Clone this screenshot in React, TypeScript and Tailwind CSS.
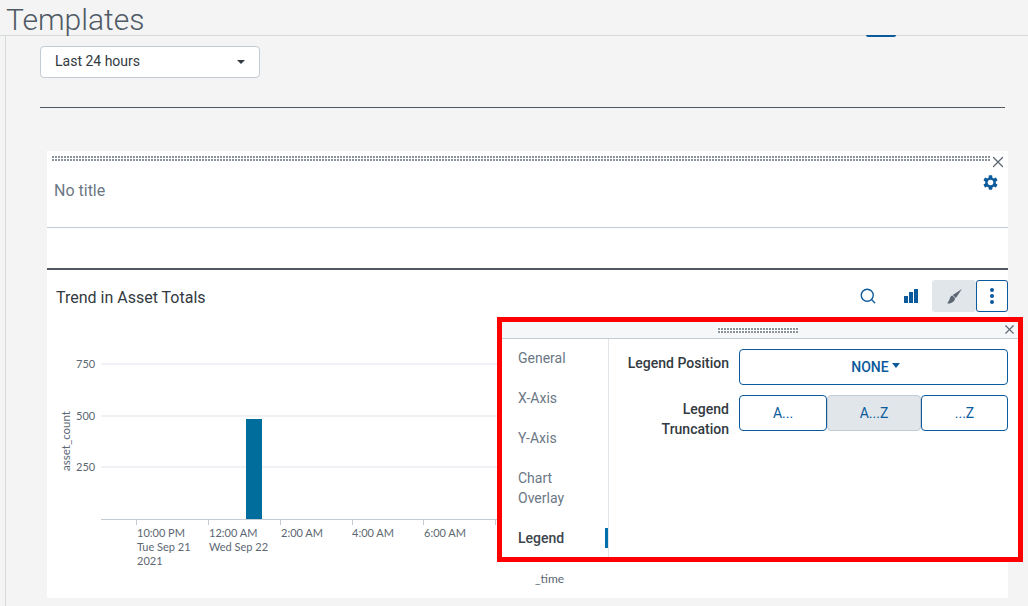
import { Search, X } from "lucide-react"

const ticks = [136, 208, 280, 352, 423, 495]
const gridLines = [364, 416, 467]

function Grip({ className }: { className: string }) {
  return (
    <div
      className={
        "bg-[#8a939c] bg-[linear-gradient(90deg,#ffffff_1px,transparent_1px),linear-gradient(#ffffff_1px,transparent_1px)] bg-[length:3px_3px] " + className
      }
    />
  )
}

function Gear() {
  return (
    <svg width="15" height="15" viewBox="0 0 15 15" fill="#0b5a9c" className="absolute left-[936px] top-[24px]">
      {[0, 60, 120].map((deg) => (
        <rect key={deg} x="5.7" y="0.3" width="3.6" height="14.4" rx="0.6" transform={`rotate(${deg} 7.5 7.5)`} />
      ))}
      <circle cx="7.5" cy="7.5" r="4" fill="none" stroke="#0b5a9c" strokeWidth="2.6" />
      <circle cx="7.5" cy="7.5" r="2.8" fill="#fff" />
    </svg>
  )
}

function Chart() {
  return (
    <svg width="961" height="286" viewBox="47 312 961 286" className="block" style={{ fontFamily: "Lato, sans-serif" }}>
      {gridLines.map((y) => (
        <line key={y} x1="101" x2="1008" y1={y} y2={y} stroke="#e1e6eb" strokeWidth="1" />
      ))}
      <line x1="101" x2="1008" y1="519.5" y2="519.5" stroke="#c3cbd4" strokeWidth="1" />
      {ticks.map((x) => (
        <line key={x} x1={x + 0.5} x2={x + 0.5} y1="519" y2="525" stroke="#c3cbd4" strokeWidth="1" />
      ))}
      <rect x="246" y="419" width="16" height="100" fill="#006d9c" />
      <g fontSize="11" fill="#5c6773">
        <text x="76" y="368">750</text>
        <text x="76" y="420">500</text>
        <text x="76" y="471">250</text>
        <text x="137" y="537">10:00 PM</text>
        <text x="137" y="551">Tue Sep 21</text>
        <text x="137" y="565">2021</text>
        <text x="209" y="537">12:00 AM</text>
        <text x="209" y="551">Wed Sep 22</text>
        <text x="281" y="537">2:00 AM</text>
        <text x="352" y="537">4:00 AM</text>
        <text x="424" y="537">6:00 AM</text>
        <text x="535" y="583" fontSize="12">_time</text>
        <text transform="translate(70 441) rotate(-90)" textAnchor="middle" fontSize="11.5">asset_count</text>
      </g>
    </svg>
  )
}

function LegendPanel() {
  const items = ["General", "X-Axis", "Y-Axis"]
  const segBtn = "flex items-center justify-center h-[36px] border border-[#0b5a9c] rounded-[4px] bg-white text-[#0b5a9c] text-sm"

  return (
    <div className="absolute left-[450px] top-[166px] w-[526px] h-[245px] border-[5px] border-[#ff0000] bg-white flex flex-col">
      <div className="relative h-[17px] shrink-0 bg-[#f5f7f8] border-b border-[#c3cbd4] flex items-center justify-center">
        <Grip className="w-[81px] h-[6px] mr-[6px]" />
        <X size={15} strokeWidth={1.8} className="absolute right-[1px] top-0 text-[#5c6773]" />
      </div>
      <div className="flex flex-1">
        <div className="w-[107px] border-r border-[#e1e6eb] pl-[16px] pt-[9px] text-sm leading-[20px] text-[#6b7785]">
          {items.map((item) => (
            <div key={item} className="mb-[20px]">{item}</div>
          ))}
          <div className="mb-[20px]">Chart<br />Overlay</div>
          <div className="relative text-[#3c444d] font-medium">
            Legend
            <div className="absolute right-0 top-0 w-[3px] h-[20px] bg-[#0070ad]" />
          </div>
        </div>
        <div className="flex-1 px-[10px] pt-[10px]">
          <div className="flex gap-[10px] mb-[10px]">
            <div className="w-[110px] text-right text-sm leading-[20px] font-medium text-[#333a41] pt-[4px]">Legend Position</div>
            <div className="flex-1 flex items-center justify-center gap-[3px] pl-[4px] h-[36px] border border-[#0b5a9c] rounded-[4px] text-[#0b5a9c] text-sm font-medium">
              NONE
              <span className="mb-[3px] border-x-[4px] border-t-[5px] border-x-transparent border-t-[#0b5a9c]" />
            </div>
          </div>
          <div className="flex gap-[10px]">
            <div className="w-[110px] text-right text-sm leading-[20px] font-medium text-[#333a41] pt-[4px]">Legend<br />Truncation</div>
            <div className="flex-1 flex">
              <div className={segBtn + " w-[88px]"}>A...</div>
              <div className="flex items-center justify-center h-[36px] w-[94px] border border-[#c3cbd4] rounded-[4px] bg-[#e1e6eb] text-[#0b5a9c] text-sm">A...Z</div>
              <div className={segBtn + " flex-1"}>...Z</div>
            </div>
          </div>
        </div>
      </div>
    </div>
  )
}

export default function App() {
  return (
    <div className="relative w-[1028px] h-[606px] overflow-hidden bg-[#f4f4f4]" style={{ fontFamily: "Roboto, sans-serif" }}>
      <div className="relative h-[36px] border-b border-[#d5dadc] pl-[6px]">
        <h1 className="text-[30px] leading-[40px] font-light text-[#4f5a65]">Templates</h1>
        <div className="absolute left-[866px] bottom-[-2px] w-[30px] h-[2px] rounded-b-[2px] bg-[#0b5a9c]" />
      </div>
      <div className="ml-[5px] h-[570px] border-l border-[#d5dadc]">
        <div className="pl-[34px] pt-[10px] pr-[23px]">
          <div className="flex items-center justify-between w-[220px] h-[32px] bg-white border border-[#c3cbd4] rounded-[4px] px-[14px] text-sm text-[#333a41]">
            <span className="pb-[2px]">Last 24 hours</span>
            <span className="border-x-[4px] border-t-[4px] border-x-transparent border-t-[#333a41]" />
          </div>
          <div className="mt-[29px] h-px bg-[#51585f]" />
        </div>
        <div className="relative ml-[41px] mt-[43px] w-[961px] h-[447px] bg-white">
          <div className="relative h-[77px] border-b border-[#c3cbd4]">
            <Grip className="absolute left-[4px] top-[4px] w-[939px] h-[6px]" />
            <X size={18} strokeWidth={1.7} className="absolute right-px top-[2px] text-[#5c6773]" />
            <Gear />
            <div className="pl-[7px] pt-[30px] text-base leading-[20px] text-[#6b7785]">No title</div>
          </div>
          <div className="h-[42px] border-b-2 border-[#51585f]" />
          <div className="flex items-center h-[42px] pt-[10px]">
            <div className="pl-[9px] pt-[4px] text-base text-[#333a41]">Trend in Asset Totals</div>
            <div className="ml-auto flex items-center h-[32px]">
              <div className="w-[43px] flex justify-center"><Search size={18} strokeWidth={1.8} className="text-[#0b5a9c]" /></div>
              <div className="w-[43px] flex justify-center">
                <svg width="14" height="14" viewBox="0 0 14 14" fill="#0b5a9c">
                  <rect x="0" y="7" width="4" height="7" />
                  <rect x="5" y="3" width="4" height="11" />
                  <rect x="10" y="0" width="4" height="14" />
                </svg>
              </div>
              <div className="w-[44px] h-[32px] bg-[#e1e6eb] rounded-[3px] flex items-center justify-center">
                <svg width="15" height="15" viewBox="0 0 15 15" fill="#5c6773">
                  <path d="M14.9.1 8.9 9 5.8 6Z" />
                  <path d="M5.3 6.4C3.4 6.8 3 8.5 2.5 10.5 2 12 1 13 .2 14.6 3 14.8 6 13.7 7.4 11.5 8 10.3 8.2 9.2 7.6 8.4Z" />
                </svg>
              </div>
              <div className="w-[32px] h-[32px] border border-[#0b5a9c] rounded-[3px] flex flex-col items-center justify-center gap-[2px]">
                <span className="w-[4px] h-[4px] rounded-full bg-[#0b5a9c]" />
                <span className="w-[4px] h-[4px] rounded-full bg-[#0b5a9c]" />
                <span className="w-[4px] h-[4px] rounded-full bg-[#0b5a9c]" />
              </div>
            </div>
          </div>
          <Chart />
          <LegendPanel />
        </div>
      </div>
    </div>
  )
}
